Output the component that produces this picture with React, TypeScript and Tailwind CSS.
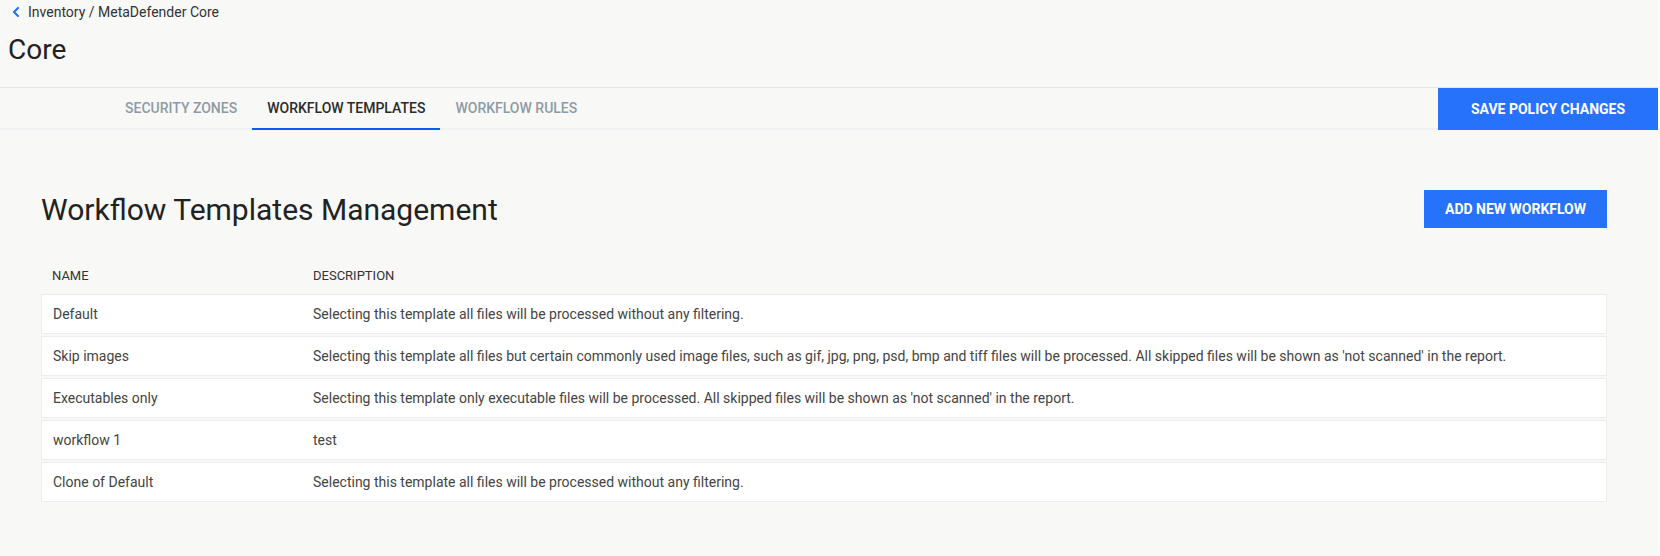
import { ChevronLeft } from "lucide-react";

type Template = { name: string; description: string };

const TEMPLATES: Template[] = [
  { name: "Default", description: "Selecting this template all files will be processed without any filtering." },
  {
    name: "Skip images",
    description:
      "Selecting this template all files but certain commonly used image files, such as gif, jpg, png, psd, bmp and tiff files will be processed. All skipped files will be shown as 'not scanned' in the report.",
  },
  {
    name: "Executables only",
    description: "Selecting this template only executable files will be processed. All skipped files will be shown as 'not scanned' in the report.",
  },
  { name: "workflow 1", description: "test" },
  { name: "Clone of Default", description: "Selecting this template all files will be processed without any filtering." },
];

const TABS = ["Security Zones", "Workflow Templates", "Workflow Rules"];

export default function App() {
  const active = "Workflow Templates";

  return (
    <div className="flex h-[556px] w-full overflow-hidden bg-[#f8f8f7] font-['Roboto','Liberation_Sans',sans-serif]">
      <div className="flex min-w-0 flex-1 flex-col">
        {/* Header */}
        <div className="flex h-6 items-center pl-2 text-[14px] text-[#333]">
          <ChevronLeft className="mr-[4px] h-[16px] w-[16px] text-[#2672fa]" strokeWidth={3.2} />
          <span>Inventory / MetaDefender Core</span>
        </div>
        <h1 className="mt-[9px] pl-2 text-[28px] leading-[34px] text-[#222]">Core</h1>

        {/* Tabs */}
        <div className="mt-[20px] flex h-[43px] border-t border-[#e6e6e6]">
          <div className="flex flex-1 border-b-2 border-[#eef0f4] pl-[110px]">
            {TABS.map(t => (
              <button key={t}
                className={`-mb-[2px] border-b-2 px-[15px] pt-[1px] text-[14px] font-medium uppercase ${t === active ? "border-[#0c5ce8] text-[#2b2b2b]" : "border-transparent text-[#8d9ba6]"}`}>
                {t}
              </button>
            ))}
          </div>
          <button className="w-[220px] bg-[#2672fa] text-[14px] font-bold uppercase text-white">
            Save Policy Changes
          </button>
        </div>

        {/* Content */}
        <div className="pl-[41px] pr-[51px]">
          <div className="mt-[60px] flex h-[38px] items-center justify-between">
            <h2 className="text-[30px] font-normal text-[#222]">Workflow Templates Management</h2>
            <button className="h-[38px] w-[183px] bg-[#2672fa] text-[14px] font-bold uppercase text-white">
              Add New Workflow
            </button>
          </div>

          <div className="mt-[30px] grid h-[36px] grid-cols-[260px_1fr] items-center px-[11px] text-[13px] font-normal uppercase text-[#333]">
            <span>Name</span>
            <span className="pl-[1px]">Description</span>
          </div>

          <div className="flex flex-col gap-[2px]">
            {TEMPLATES.map(t => (
              <div key={t.name}
                className="grid h-[40px] grid-cols-[260px_1fr] items-center border border-[#ececec] bg-white px-[11px] text-[14px] text-[#444]">
                <span>{t.name}</span>
                <span className="truncate">{t.description}</span>
              </div>
            ))}
          </div>
        </div>
      </div>
      <div className="w-[2px] bg-[#fcfcfc]" />
    </div>
  );
}
